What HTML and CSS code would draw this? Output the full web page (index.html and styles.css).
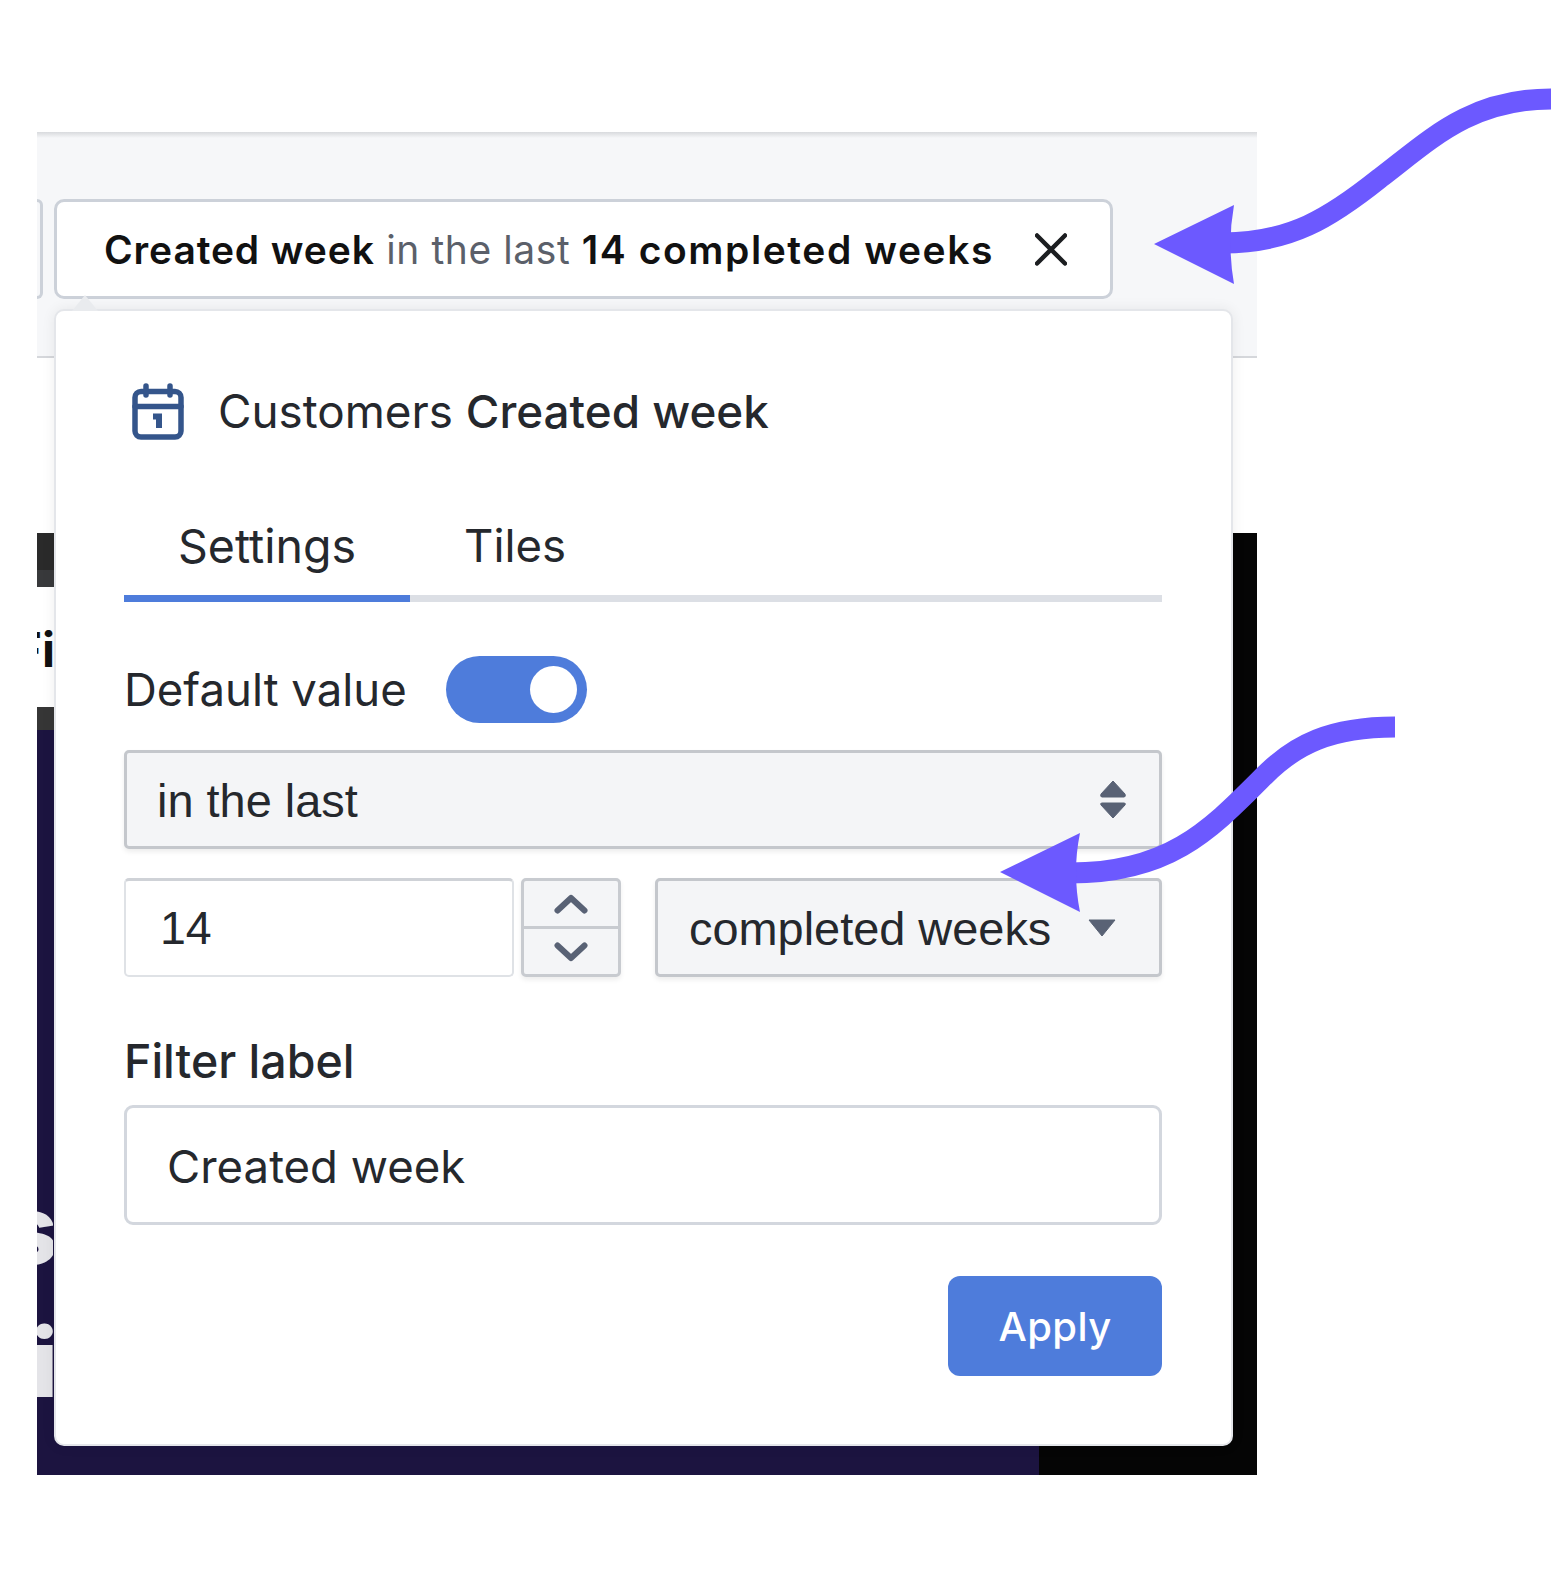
FILE: index.html
```html
<!DOCTYPE html>
<html lang="en">

<head>
  <meta charset="UTF-8">
  <title>Date filter popover</title>
  <link rel="stylesheet" href="styles.css">
</head>

<body>
  <div class="page">
    <div class="frame">
      <div class="filterBar">
        <div class="prevChip"></div>
        <div class="chip">
          <span class="chipText"><b>Created week</b> in the last <b class="chipValue">14 completed weeks</b></span>
          <svg class="chipClose" width="32" height="33" viewBox="0 0 32 33">
            <path d="M2 2.5 L30 30.5 M30 2.5 L2 30.5" fill="none" stroke="#1c1e21" stroke-width="4.5" stroke-linecap="round" />
          </svg>
        </div>
      </div>
      <div class="blank"></div>
      <div class="dash">
        <div class="dashLeft">
          <div class="darkTop"></div>
          <div class="whiteRow"><span class="fiText">Fi</span></div>
          <div class="darkThin"></div>
          <div class="navy">
            <div class="navyText"><span>s</span></div>
            <div class="navyText"><span>i</span></div>
          </div>
        </div>
        <div class="dashRight"></div>
      </div>

      <div class="popup">
        <div class="caret"></div>
        <div class="popTitle">
          <svg class="calIcon" width="52" height="57" viewBox="0 0 52 57">
            <rect x="3" y="8.5" width="46" height="45.5" rx="6" fill="none" stroke="#34558b" stroke-width="5.5" />
            <path d="M3 23.5 H49 M14 3 V12 M38 3 V12" fill="none" stroke="#34558b" stroke-width="5.5" stroke-linecap="round" />
            <path d="M21 33.5 H27 V45" fill="none" stroke="#34558b" stroke-width="6" />
          </svg>
          <span>Customers <b>Created week</b></span>
        </div>

        <div class="tabs">
          <div class="tab active">Settings</div>
          <div class="tab">Tiles</div>
        </div>

        <div class="defaultRow">
          <span>Default value</span>
          <div class="toggle"><div class="knob"></div></div>
        </div>

        <div class="selectBox wide">
          <span>in the last</span>
          <svg width="28" height="41" viewBox="0 0 28 41">
            <path d="M14 2 L26 15 Q27 18 25 18 H3 Q1 18 2 15 Z" fill="#596275" stroke="#596275" stroke-width="1" stroke-linejoin="round" />
            <path d="M14 39 L26 26 Q27 24 25 24 H3 Q1 24 2 26 Z" fill="#596275" stroke="#596275" stroke-width="1" stroke-linejoin="round" />
          </svg>
        </div>

        <div class="valueRow">
          <div class="numInput">14</div>
          <div class="stepper">
            <div class="stepBtn">
              <svg width="34" height="20" viewBox="0 0 34 20"><path d="M3.5 16.5 L17 4 L30.5 16.5" fill="none" stroke="#596275" stroke-width="6" stroke-linecap="round" stroke-linejoin="round" /></svg>
            </div>
            <div class="stepBtn">
              <svg width="34" height="20" viewBox="0 0 34 20"><path d="M3.5 3.5 L17 16 L30.5 3.5" fill="none" stroke="#596275" stroke-width="6" stroke-linecap="round" stroke-linejoin="round" /></svg>
            </div>
          </div>
          <div class="selectBox unit">
            <span>completed weeks</span>
            <svg width="30" height="18" viewBox="0 0 30 18"><path d="M2 1 H28 L15 17 Z" fill="#596275" stroke="#596275" stroke-width="1" stroke-linejoin="round" /></svg>
          </div>
        </div>

        <div class="labelTitle">Filter label</div>
        <div class="labelInput">Created week</div>

        <div class="footer">
          <div class="applyBtn">Apply</div>
        </div>
      </div>
    </div>

    <!-- annotation arrows -->
    <svg class="arrows" width="1560" height="1588" viewBox="0 0 1560 1588">
      <path d="M1551 99 C1470 99 1430 140 1380 178 C1330 218 1290 243 1223 243" fill="none" stroke="#6c59ff" stroke-width="21" />
      <path d="M1154 244 L1234 205 Q1227 244 1234 284 Z" fill="#6c59ff" />
      <path d="M1395 727 C1330 727 1295 745 1265 775 C1210 830 1170 873 1070 873" fill="none" stroke="#6c59ff" stroke-width="21" />
      <path d="M1000 872 L1080 833 Q1072 872 1080 912 Z" fill="#6c59ff" />
    </svg>
  </div>
</body>

</html>
```

FILE: styles.css
```css
* {
  box-sizing: border-box;
}

body {
  margin: 0;
  background: #fff;
  font-family: Inter, "Liberation Sans", sans-serif;
  color: #25282d;
}

b {
  font-weight: 500;
}

.page {
  position: relative;
  height: 1588px;
  padding: 132px 0 0 37px;
  overflow: hidden;
}

.frame {
  position: relative;
  width: 1220px;
  height: 1343px;
  display: flex;
  flex-direction: column;
}

.arrows {
  position: absolute;
  left: 0;
  top: 0;
}

/* filter bar */
.filterBar {
  height: 226px;
  padding-top: 67px;
  display: flex;
  gap: 11px;
  align-items: flex-start;
  background: linear-gradient(#d8dadd, #f6f7f9 6px);
  border-bottom: 2px solid #d5d7db;
}

.prevChip {
  width: 6px;
  height: 100px;
  border: 3px solid #ccd1d9;
  border-left: 0;
  border-radius: 0 8px 8px 0;
}

.chip {
  width: 1059px;
  height: 100px;
  padding: 0 43px 0 47px;
  display: flex;
  align-items: center;
  justify-content: space-between;
  background: #fff;
  border: 3px solid #ccd1d9;
  border-radius: 10px;
  font-size: 39px;
  letter-spacing: 0.57px;
  color: #5b606a;
}

.chipText b {
  font-weight: 600;
  letter-spacing: 0.87px;
  color: #111;
}

.chipText .chipValue {
  letter-spacing: 1.57px;
}

.blank {
  height: 175px;
  background: #fff;
}

/* dashboard behind the popup */
.dash {
  flex: 1;
  display: flex;
}

.dashLeft {
  width: 1002px;
  display: flex;
  flex-direction: column;
}

.dashRight {
  flex: 1;
  background: #050505;
}

.darkTop {
  height: 54px;
  background: linear-gradient(#2a2a2a 37px, #38393b 37px);
}

.whiteRow {
  width: 16px;
  height: 120px;
  padding-top: 3px;
  background: #fff;
  overflow: hidden;
  display: flex;
  justify-content: flex-end;
  font-weight: 700;
  font-size: 48px;
  line-height: 120px;
  color: #111;
}

.fiText {
  margin-right: -2px;
  white-space: nowrap;
}

.darkThin {
  height: 23px;
  background: #363636;
}

.navy {
  flex: 1;
  background: #1c1440;
  padding-top: 433px;
}

.navyText {
  width: 16px;
  overflow: hidden;
  display: flex;
  justify-content: flex-end;
  font-weight: 800;
  font-size: 95px;
  line-height: 133px;
  color: #e4e4e8;
}

.navyText span {
  margin-right: -5px;
}

/* popup */
.popup {
  position: absolute;
  left: 17px;
  top: 177px;
  width: 1179px;
  height: 1137px;
  padding: 72px 69px 0 68px;
  background: #fff;
  border: 2px solid #e4e6ea;
  border-radius: 10px;
  box-shadow: 0 0 14px rgba(0, 0, 0, 0.07);
  font-size: 45.5px;
}

.caret {
  position: absolute;
  left: 16px;
  top: -16px;
  width: 26px;
  height: 16px;
  background: #e9ebee;
  clip-path: polygon(50% 0, 100% 100%, 0 100%);
}

.popTitle {
  display: flex;
  align-items: center;
  gap: 34px;
  height: 57px;
  padding-left: 8px;
  font-size: 45.8px;
}

.tabs {
  margin-top: 64px;
  display: flex;
  border-bottom: 7px solid #dcdfe5;
}

.tab {
  padding: 0 54px;
  height: 91px;
  line-height: 84px;
  font-size: 45.5px;
}

.tab.active {
  margin-bottom: -7px;
  height: 98px;
  border-bottom: 7px solid #4e7cdb;
  font-size: 46.5px;
}

.defaultRow {
  margin-top: 54px;
  display: flex;
  align-items: center;
  gap: 39px;
}

.toggle {
  width: 141px;
  height: 67px;
  padding: 10px;
  display: flex;
  justify-content: flex-end;
  background: #4e7cdb;
  border-radius: 34px;
}

.knob {
  width: 47px;
  height: 47px;
  background: #fff;
  border-radius: 50%;
}

.selectBox {
  display: flex;
  align-items: center;
  justify-content: space-between;
  background: #f4f5f7;
  border: 3px solid #c4c7cc;
  border-radius: 5px;
  box-shadow: 0 3px 5px rgba(0, 0, 0, 0.07);
  font-family: "Liberation Sans", sans-serif;
  font-size: 46.9px;
}

.selectBox span {
  padding-top: 2px;
}

.selectBox.wide {
  margin-top: 27px;
  height: 99px;
  padding: 0 32px 0 30px;
}

.valueRow {
  margin-top: 29px;
  display: flex;
  height: 99px;
}

.numInput {
  width: 390px;
  padding-left: 34px;
  display: flex;
  align-items: center;
  border: 2px solid #dfe2e6;
  border-top: 3px solid #cfd2d7;
  border-radius: 5px;
  font-family: "Liberation Sans", sans-serif;
  font-size: 46.5px;
}

.stepper {
  margin-left: 7px;
  width: 100px;
  display: flex;
  flex-direction: column;
  background: #f4f5f7;
  border: 3px solid #c8cbd0;
  border-radius: 5px;
  box-shadow: 0 3px 5px rgba(0, 0, 0, 0.07);
}

.stepBtn {
  flex: 1;
  display: flex;
  align-items: center;
  justify-content: center;
}

.stepBtn + .stepBtn {
  border-top: 3px solid #c8cbd0;
}

.selectBox.unit {
  margin-left: 34px;
  flex: 1;
  padding: 0 42px 0 31px;
}

.labelTitle {
  margin-top: 56px;
  font-weight: 500;
  font-size: 46.5px;
}

.labelInput {
  margin-top: 16px;
  height: 120px;
  padding: 2px 0 0 40px;
  display: flex;
  align-items: center;
  border: 3px solid #d3d7de;
  border-radius: 9px;
}

.footer {
  margin-top: 51px;
  display: flex;
  justify-content: flex-end;
}

.applyBtn {
  width: 214px;
  height: 100px;
  display: flex;
  align-items: center;
  justify-content: center;
  background: #4e7cdb;
  border-radius: 12px;
  color: #fff;
  font-size: 40px;
  font-weight: 500;
  letter-spacing: 0.4px;
}
```
